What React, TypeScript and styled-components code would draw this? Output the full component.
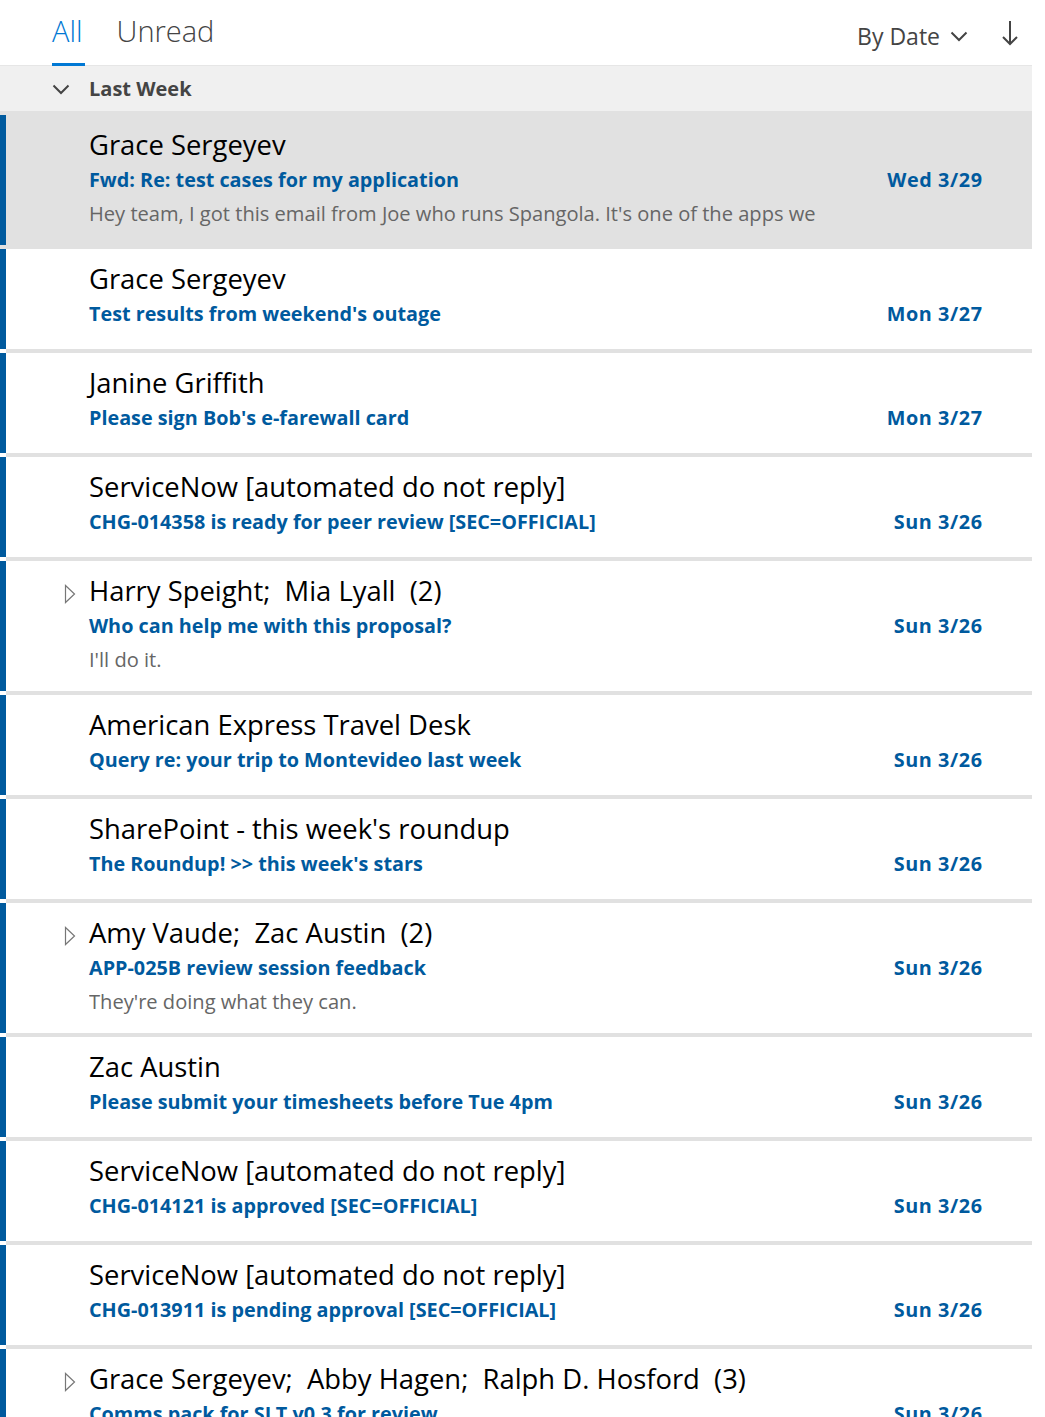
import styled, { createGlobalStyle } from 'styled-components';

const GlobalStyle = createGlobalStyle`
  html, body {
    margin: 0;
    padding: 0;
    background: #ffffff;
  }
  body {
    font-family: 'Open Sans', 'Noto Sans', sans-serif;
  }
`;

type Mail = {
  sender: string;
  subject: string;
  date: string;
  preview?: string;
  thread?: boolean;
  selected?: boolean;
};

const mails: Mail[] = [
  {
    sender: 'Grace Sergeyev',
    subject: 'Fwd: Re: test cases for my application',
    date: 'Wed 3/29',
    preview:
      "Hey team, I got this email from Joe who runs Spangola. It's one of the apps we",
    selected: true
  },
  {
    sender: 'Grace Sergeyev',
    subject: "Test results from weekend's outage",
    date: 'Mon 3/27'
  },
  {
    sender: 'Janine Griffith',
    subject: "Please sign Bob's e-farewall card",
    date: 'Mon 3/27'
  },
  {
    sender: 'ServiceNow [automated do not reply]',
    subject: 'CHG-014358 is ready for peer review [SEC=OFFICIAL]',
    date: 'Sun 3/26'
  },
  {
    sender: 'Harry Speight;  Mia Lyall  (2)',
    subject: 'Who can help me with this proposal?',
    date: 'Sun 3/26',
    preview: "I'll do it.",
    thread: true
  },
  {
    sender: 'American Express Travel Desk',
    subject: 'Query re: your trip to Montevideo last week',
    date: 'Sun 3/26'
  },
  {
    sender: "SharePoint - this week's roundup",
    subject: "The Roundup! >> this week's stars",
    date: 'Sun 3/26'
  },
  {
    sender: 'Amy Vaude;  Zac Austin  (2)',
    subject: 'APP-025B review session feedback',
    date: 'Sun 3/26',
    preview: "They're doing what they can.",
    thread: true
  },
  {
    sender: 'Zac Austin',
    subject: 'Please submit your timesheets before Tue 4pm',
    date: 'Sun 3/26'
  },
  {
    sender: 'ServiceNow [automated do not reply]',
    subject: 'CHG-014121 is approved [SEC=OFFICIAL]',
    date: 'Sun 3/26'
  },
  {
    sender: 'ServiceNow [automated do not reply]',
    subject: 'CHG-013911 is pending approval [SEC=OFFICIAL]',
    date: 'Sun 3/26'
  },
  {
    sender: 'Grace Sergeyev;  Abby Hagen;  Ralph D. Hosford  (3)',
    subject: 'Comms pack for SLT v0.3 for review',
    date: 'Sun 3/26',
    thread: true
  }
];

const Container = styled.div`
  width: 1032px;
`;

const Toolbar = styled.div`
  display: flex;
  align-items: stretch;
  height: 65px;
  padding: 0 14px 0 52px;
  border-bottom: 1px solid #e6e6e6;
`;

const Tab = styled.div<{ $active?: boolean }>`
  display: flex;
  align-items: center;
  box-sizing: border-box;
  height: 66px;
  margin-right: 32px;
  padding: 0 2px 2px 0;
  font-size: 29px;
  font-weight: 300;
  color: ${(p) => (p.$active ? '#0078d4' : '#444444')};
  border-bottom: 3px solid ${(p) => (p.$active ? '#0078d4' : 'transparent')};
`;

const Spacer = styled.div`
  flex: 1;
`;

const SortButton = styled.div`
  display: flex;
  align-items: center;
  gap: 10px;
  font-size: 23px;
  color: #444444;
  margin-right: 34px;
  padding-top: 6px;
`;

const IconWrap = styled.div`
  display: flex;
  align-items: center;
  color: #444444;
`;

const GroupHeader = styled.div`
  display: flex;
  align-items: center;
  height: 45px;
  background: #f0f0f0;
  padding-left: 52px;
  gap: 19px;
  font-size: 20px;
  font-weight: 700;
  color: #444444;
`;

const Divider = styled.div<{ $selected?: boolean }>`
  height: 4px;
  margin-left: ${(p) => (p.$selected ? 0 : 6)}px;
  background: #e1e1e1;
`;

const Item = styled.div<{ $selected?: boolean; $tall?: boolean }>`
  display: flex;
  background: ${(p) => (p.$selected ? '#e1e1e1' : '#ffffff')};
  border-left: 6px solid #005a9e;
  padding: 12px 50px ${(p) => (p.$tall ? 14 : 18)}px 0;
`;

const Gutter = styled.div`
  width: 84px;
  flex: none;
  display: flex;
  justify-content: flex-end;
  padding-right: 14px;
  box-sizing: border-box;
  padding-top: 11px;
`;

const Body = styled.div`
  flex: 1;
  min-width: 0;
  margin-left: -1px;
`;

const Sender = styled.div`
  font-size: 27.4px;
  line-height: 36px;
  color: #000000;
  white-space: pre;
`;

const SubjectLine = styled.div`
  display: flex;
  justify-content: space-between;
  font-size: 19.8px;
  line-height: 34px;
  font-weight: 700;
  color: #005a9e;
`;

const DateText = styled.span`
  letter-spacing: 0.6px;
  margin-right: -0.6px;
`;

const Preview = styled.div`
  font-size: 20.1px;
  line-height: 34px;
  color: #666666;
  white-space: nowrap;
  overflow: hidden;
`;

const Chevron = ({ size = 18 }: { size?: number }) => (
  <svg width={size} height={size} viewBox="0 0 18 18" fill="none">
    <path d="M1.5 5.5 L9 13 L16.5 5.5" stroke="currentColor" strokeWidth="2" />
  </svg>
);

const Caret = () => (
  <svg width="12" height="20" viewBox="0 0 12 20" fill="none">
    <path d="M1.5 1.5 L10.5 10 L1.5 18.5 Z" stroke="#777777" strokeWidth="1.2" />
  </svg>
);

const App = () => {
  return (
    <Container>
      <GlobalStyle />
      <Toolbar>
        <Tab $active>All</Tab>
        <Tab>Unread</Tab>
        <Spacer />
        <SortButton>
          By Date
          <Chevron />
        </SortButton>
        <IconWrap>
          <svg width="16" height="26" viewBox="0 0 16 26" fill="none">
            <path d="M8 1 V24 M1 17 L8 24 L15 17" stroke="currentColor" strokeWidth="2" />
          </svg>
        </IconWrap>
      </Toolbar>
      <GroupHeader>
        <Chevron />
        Last Week
      </GroupHeader>
      {mails.map((mail, i) => (
        <div key={i}>
          <Divider $selected={i === 0 ? mail.selected : mails[i - 1].selected} />
          <Item $selected={mail.selected} $tall={!!mail.preview}>
            <Gutter>{mail.thread && <Caret />}</Gutter>
            <Body>
              <Sender>{mail.sender}</Sender>
              <SubjectLine>
                <span>{mail.subject}</span>
                <DateText>{mail.date}</DateText>
              </SubjectLine>
              {mail.preview && <Preview>{mail.preview}</Preview>}
            </Body>
          </Item>
        </div>
      ))}
    </Container>
  );
};

export default App;
